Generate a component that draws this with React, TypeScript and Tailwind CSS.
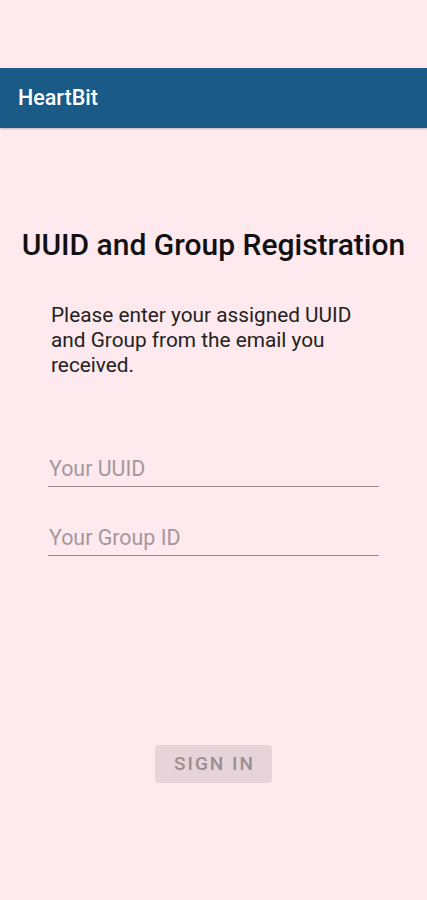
import React from "react";

export default function App() {
  return (
    <div className="min-h-[900px] w-full bg-[#fee9ee] font-['Roboto',sans-serif] flex flex-col">
      {/* status bar area */}
      <div className="h-[68px]" />

      {/* App bar */}
      <div className="h-[60px] bg-[#1a5a86] flex items-center px-[18px] shadow-[0_1px_2px_rgba(0,0,0,0.25)]">
        <span className="text-white text-[21.5px] font-medium">HeartBit</span>
      </div>

      <div className="flex flex-col items-center pt-[99px]">
        <h1 className="text-[30px] leading-[36px] font-medium text-[#111] whitespace-nowrap">
          UUID and Group Registration
        </h1>
      </div>

      <p className="mt-[40px] ml-[51px] text-[20.8px] leading-[25px] text-[#222] whitespace-nowrap">
        Please enter your assigned UUID<br />
        and Group from the email you<br />
        received.
      </p>

      <div className="mt-[78px] ml-[48px] w-[331px] flex flex-col gap-[38px]">
        <Field placeholder="Your UUID" />
        <Field placeholder="Your Group ID" />
      </div>

      <div className="flex justify-center mt-[189px]">
        <button className="w-[117px] h-[38px] rounded-[4px] bg-[#e6d4da] text-[#9b8e93] text-[19px] font-medium tracking-[2px] pl-[2px]">
          SIGN IN
        </button>
      </div>
    </div>
  );
}

function Field({ placeholder }: { placeholder: string }) {
  return (
    <input
      placeholder={placeholder}
      className="w-full bg-transparent border-b-[1.5px] border-[#9a8c90] pb-[4px] pl-[1px] text-[21.4px] leading-[26px] outline-none placeholder:text-[#a4979b]"
    />
  );
}
